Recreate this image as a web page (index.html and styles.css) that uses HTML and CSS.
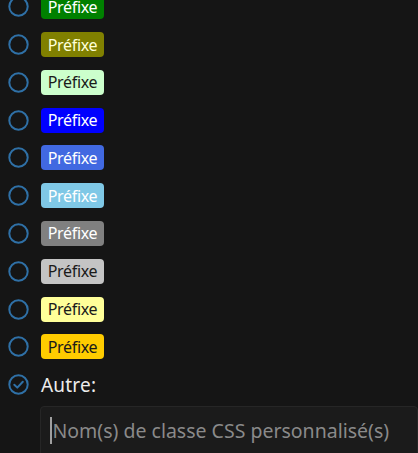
FILE: index.html
```html
<!DOCTYPE html>
<html lang="fr">
<head>
<meta charset="utf-8">
<link rel="stylesheet" href="styles.css">
</head>
<body>
<div class="list">
  <div class="row"><svg class="radio" viewBox="0 0 21 21"><circle cx="10.5" cy="10.5" r="9.2"/></svg><span class="badge b-green">Préfixe</span></div>
  <div class="row"><svg class="radio" viewBox="0 0 21 21"><circle cx="10.5" cy="10.5" r="9.2"/></svg><span class="badge b-olive">Préfixe</span></div>
  <div class="row"><svg class="radio" viewBox="0 0 21 21"><circle cx="10.5" cy="10.5" r="9.2"/></svg><span class="badge b-mint">Préfixe</span></div>
  <div class="row"><svg class="radio" viewBox="0 0 21 21"><circle cx="10.5" cy="10.5" r="9.2"/></svg><span class="badge b-blue">Préfixe</span></div>
  <div class="row"><svg class="radio" viewBox="0 0 21 21"><circle cx="10.5" cy="10.5" r="9.2"/></svg><span class="badge b-royal">Préfixe</span></div>
  <div class="row"><svg class="radio" viewBox="0 0 21 21"><circle cx="10.5" cy="10.5" r="9.2"/></svg><span class="badge b-sky">Préfixe</span></div>
  <div class="row"><svg class="radio" viewBox="0 0 21 21"><circle cx="10.5" cy="10.5" r="9.2"/></svg><span class="badge b-gray">Préfixe</span></div>
  <div class="row"><svg class="radio" viewBox="0 0 21 21"><circle cx="10.5" cy="10.5" r="9.2"/></svg><span class="badge b-silver">Préfixe</span></div>
  <div class="row"><svg class="radio" viewBox="0 0 21 21"><circle cx="10.5" cy="10.5" r="9.2"/></svg><span class="badge b-yellow">Préfixe</span></div>
  <div class="row"><svg class="radio" viewBox="0 0 21 21"><circle cx="10.5" cy="10.5" r="9.2"/></svg><span class="badge b-gold">Préfixe</span></div>
  <div class="row"><svg class="radio" viewBox="0 0 21 21"><circle cx="10.5" cy="10.5" r="9.2"/><path d="M6.3 10.7 L9.3 13.6 L14.8 7.7"/></svg><span class="label">Autre:</span></div>
</div>
<div class="field"><span class="caret"></span><span class="placeholder">Nom(s) de classe CSS personnalisé(s)</span></div>
</body>
</html>
```
FILE: styles.css
```css
html, body {
  margin: 0;
  padding: 0;
  background: #151515;
  overflow: hidden;
}
body {
  font-family: "Noto Sans", "Open Sans", sans-serif;
  width: 418px;
  height: 453px;
}
.list {
  display: flex;
  flex-direction: column;
  gap: 12.8px;
  margin-top: -5.8px;
  padding-left: 8px;
}
.row {
  display: flex;
  align-items: center;
  gap: 12px;
  height: 25px;
}
.radio {
  width: 21px;
  height: 21px;
  flex: none;
  fill: none;
  stroke: #2f70a6;
  stroke-width: 2;
  stroke-linecap: round;
  stroke-linejoin: round;
}
.badge {
  display: inline-flex;
  align-items: center;
  justify-content: center;
  width: 63px;
  height: 25px;
  border-radius: 4px;
  font-size: 16px;
  box-sizing: border-box;
  letter-spacing: -0.3px;
  white-space: nowrap;
}
.b-green { background: #008000; color: #ffffff; }
.b-olive { background: #808000; color: #ffffd8; }
.b-mint { background: #ccffcc; color: #1a1a1a; }
.b-blue { background: #0000ff; color: #ffffff; }
.b-royal { background: #4169e1; color: #ffffff; }
.b-sky { background: #7fc8e6; color: #ffffff; }
.b-gray { background: #808080; color: #ffffff; }
.b-silver { background: #c4c4c4; color: #1a1a1a; }
.b-yellow { background: #ffff99; color: #1a1a1a; }
.b-gold { background: #ffcc00; color: #1a1a1a; }
.label {
  color: #ececec;
  font-size: 19px;
  letter-spacing: 0.2px;
}
.field {
  margin: 9px 0 0 40px;
  height: 60px;
  background: #1b1b1b;
  border: 1px solid #262626;
  border-radius: 4px;
  display: flex;
  align-items: flex-start;
  padding: 10px 0 0 9px;
  box-sizing: border-box;
  gap: 0;
}
.caret {
  width: 1.5px;
  height: 27px;
  background: #a0a0a0;
  flex: none;
  margin-right: 1px;
}
.placeholder {
  color: #8a8a8a;
  font-size: 19.5px;
  line-height: 27px;
  white-space: nowrap;
}
```
